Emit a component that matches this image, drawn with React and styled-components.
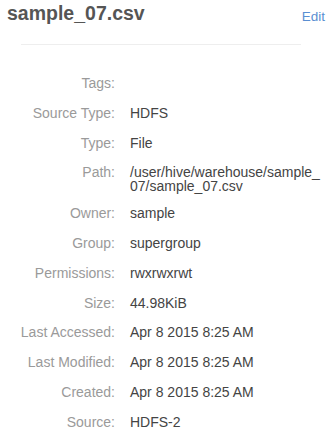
import React from "react";
import styled, { createGlobalStyle } from "styled-components";

const GlobalStyle = createGlobalStyle`
  html, body { margin: 0; padding: 0; background: #fff; }
  body { font-family: "Liberation Sans", Arial, Helvetica, sans-serif; }
`;

const Panel = styled.div`
  width: 331px;
  box-sizing: border-box;
  padding: 1px 0 0 0;
`;

const Header = styled.div`
  display: flex;
  justify-content: space-between;
  align-items: baseline;
  padding: 0 6px 0 7px;
`;

const Title = styled.h1`
  margin: 0;
  font-size: 19.5px;
  line-height: 24px;
  font-weight: bold;
  color: #555;
`;

const EditLink = styled.a`
  font-size: 13.5px;
  color: #5a8fd2;
  text-decoration: none;
  cursor: pointer;
  position: relative;
  top: 1px;
`;

const Divider = styled.hr`
  width: 280px;
  margin: 19px 0 0 21px;
  border: 0;
  border-top: 1px solid #eeeeee;
  height: 0;
`;

const List = styled.dl`
  margin: 28px 0 0 0;
  padding: 0 8px 0 0;
`;

const Row = styled.div`
  display: grid;
  grid-template-columns: 115px 1fr;
  column-gap: 15px;
  align-items: start;
  min-height: 20px;
  margin-bottom: 9.8px;
`;

const Label = styled.dt`
  margin: 0;
  text-align: right;
  font-size: 14px;
  line-height: 20px;
  color: #9a9a9a;
`;

const Value = styled.dd`
  margin: 0;
  padding-top: 3px;
  font-size: 14px;
  line-height: 14px;
  color: #444;
  word-break: break-all;
`;

const rows = [
  ["Tags:", ""],
  ["Source Type:", "HDFS"],
  ["Type:", "File"],
  ["Path:", "/user/hive/warehouse/sample_07/sample_07.csv"],
  ["Owner:", "sample"],
  ["Group:", "supergroup"],
  ["Permissions:", "rwxrwxrwt"],
  ["Size:", "44.98KiB"],
  ["Last Accessed:", "Apr 8 2015 8:25 AM"],
  ["Last Modified:", "Apr 8 2015 8:25 AM"],
  ["Created:", "Apr 8 2015 8:25 AM"],
  ["Source:", "HDFS-2"],
];

export default function App() {
  return (
    <>
      <GlobalStyle />
      <Panel>
        <Header>
          <Title>sample_07.csv</Title>
          <EditLink>Edit</EditLink>
        </Header>
        <Divider />
        <List>
          {rows.map(([label, value]) => (
            <Row key={label}>
              <Label>{label}</Label>
              <Value>{value}</Value>
            </Row>
          ))}
        </List>
      </Panel>
    </>
  );
}
